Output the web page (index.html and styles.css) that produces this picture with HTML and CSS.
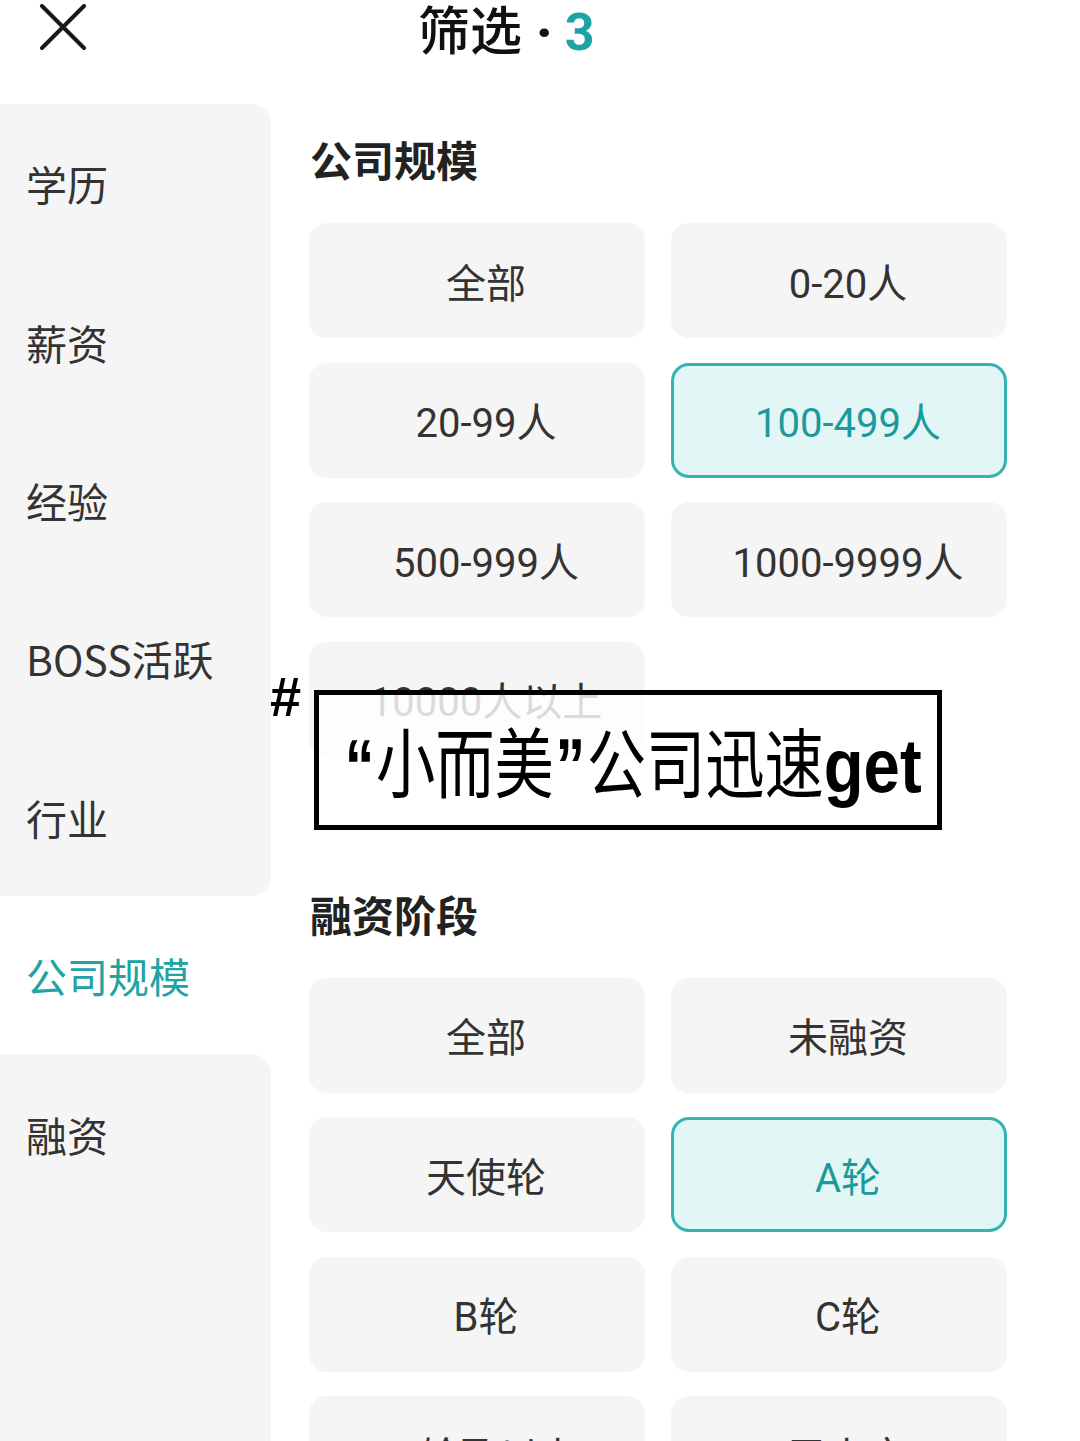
FILE: index.html
```html
<!DOCTYPE html>
<html lang="zh-CN">
	<head>
		<meta charset="UTF-8" />
		<meta name="viewport" content="width=device-width, initial-scale=1.0" />
		<title>筛选</title>
		<link rel="stylesheet" href="styles.css">
	</head>
	<body>
		<header class="top-bar">
			<button class="close-btn" aria-label="关闭">
				<svg width="48" height="46" viewBox="0 0 48 46">
					<path d="M3 2 L45 44 M45 2 L3 44" stroke="#1a1a1a" stroke-width="4" stroke-linecap="round" fill="none" />
				</svg>
			</button>
			<h1 class="title">筛选<span class="dot">·</span><span class="count">3</span></h1>
		</header>

		<div class="main">
			<nav class="sidebar">
				<div class="side-item first">学历</div>
				<div class="side-item">薪资</div>
				<div class="side-item">经验</div>
				<div class="side-item">BOSS活跃</div>
				<div class="side-item before-active">行业</div>
				<div class="side-item active">公司规模</div>
				<div class="side-item after-active">融资</div>
				<div class="side-fill"></div>
			</nav>

			<section class="content">
				<div class="group">
					<h2 class="group-title">公司规模</h2>
					<div class="options">
						<div class="option">全部</div>
						<div class="option">0-20人</div>
						<div class="option">20-99人</div>
						<div class="option selected">100-499人</div>
						<div class="option">500-999人</div>
						<div class="option">1000-9999人</div>
						<div class="option">10000人以上</div>
					</div>
				</div>

				<div class="group stage">
					<h2 class="group-title">融资阶段</h2>
					<div class="options">
						<div class="option">全部</div>
						<div class="option">未融资</div>
						<div class="option">天使轮</div>
						<div class="option selected">A轮</div>
						<div class="option">B轮</div>
						<div class="option">C轮</div>
						<div class="option">D轮及以上</div>
						<div class="option">已上市</div>
					</div>
				</div>

				<!-- caption sticker laid over the list -->
				<span class="hash">#</span>
				<div class="caption">
					<span class="caption-text"><i>“</i>小而美<i>”</i>公司迅速<b>get</b></span>
				</div>
			</section>
		</div>
	</body>
</html>
```

FILE: styles.css
```css
* {
	box-sizing: border-box;
}
html,
body {
	margin: 0;
	height: 1441px;
	overflow: hidden;
}
body {
	font-family: Roboto, "Noto Sans CJK SC", sans-serif;
	background: #ffffff;
	color: #333333;
}

.top-bar {
	height: 104px;
	display: flex;
	align-items: flex-start;
	padding-left: 39px;
}
.close-btn {
	background: none;
	border: none;
	padding: 0;
	margin-top: 4px;
	width: 48px;
	height: 46px;
	cursor: pointer;
}
.title {
	margin: 0 0 0 331px;
	font-size: 52px;
	line-height: 56px;
	font-weight: 500;
	color: #111111;
	font-family: "Noto Sans CJK SC", sans-serif;
}
.title .dot {
	font-family: Roboto, sans-serif;
	font-weight: 900;
	margin: 0 12px 0 14px;
}
.title .count {
	color: #1fa2a5;
	font-family: Roboto, sans-serif;
	font-weight: 700;
}

.main {
	display: flex;
	height: 1337px;
}

.sidebar {
	width: 271px;
	flex-shrink: 0;
	display: flex;
	flex-direction: column;
}
.side-item {
	height: 158.4px;
	flex-shrink: 0;
	display: flex;
	align-items: center;
	padding-left: 26px;
	background: #f5f5f5;
	font-size: 41px;
	color: #333333;
	font-family: "Noto Sans CJK SC", sans-serif;
}
.side-item.first {
	border-top-right-radius: 20px;
}
.side-item.before-active {
	border-bottom-right-radius: 20px;
}
.side-item.active {
	background: #ffffff;
	color: #21a3a5;
}
.side-item.after-active {
	border-top-right-radius: 20px;
}
.side-fill {
	flex: 1;
	background: #f5f5f5;
}

.content {
	position: relative;
	flex: 1;
	padding: 27px 0 0 38px;
}
.group-title {
	margin: 0 0 36px 1px;
	font-size: 42px;
	line-height: 56px;
	font-weight: 700;
	color: #222222;
	font-family: "Noto Sans CJK SC", sans-serif;
}
.group.stage {
	margin-top: 129px;
}
.options {
	display: grid;
	grid-template-columns: 336px 336px;
	column-gap: 26px;
	row-gap: 24.5px;
}
.option {
	height: 115px;
	border-radius: 18px;
	background: #f5f5f5;
	display: flex;
	align-items: center;
	justify-content: center;
	padding-left: 18px;
	font-size: 40px;
	color: #333333;
}
.option.selected {
	background: #e3f6f6;
	border: 3px solid #34b3b3;
	color: #1a9a9c;
}

.hash {
	position: absolute;
	left: -1px;
	top: 563px;
	font-family: "Liberation Sans", sans-serif;
	font-size: 56px;
	font-weight: 700;
	line-height: 60px;
	color: #000000;
}
.caption {
	position: absolute;
	left: 43px;
	top: 586px;
	width: 628px;
	height: 140px;
	border: 5px solid #000000;
	background: rgba(255, 255, 255, 0.82);
	display: flex;
	align-items: center;
	justify-content: center;
	overflow: hidden;
}
.caption-text {
	display: inline-block;
	white-space: nowrap;
	font-family: "Noto Sans CJK SC", sans-serif;
	font-size: 76px;
	line-height: 90px;
	color: #000000;
	transform: scaleX(0.78);
	transform-origin: center;
	margin-top: 4px;
}
.caption-text i {
	font-style: normal;
	font-family: "Liberation Sans", sans-serif;
	font-weight: 700;
	margin: 0 2px;
}
.caption-text b {
	font-family: "Liberation Sans", sans-serif;
	font-weight: 700;
	display: inline-block;
	transform: scaleX(1.1);
	transform-origin: left;
}
```
